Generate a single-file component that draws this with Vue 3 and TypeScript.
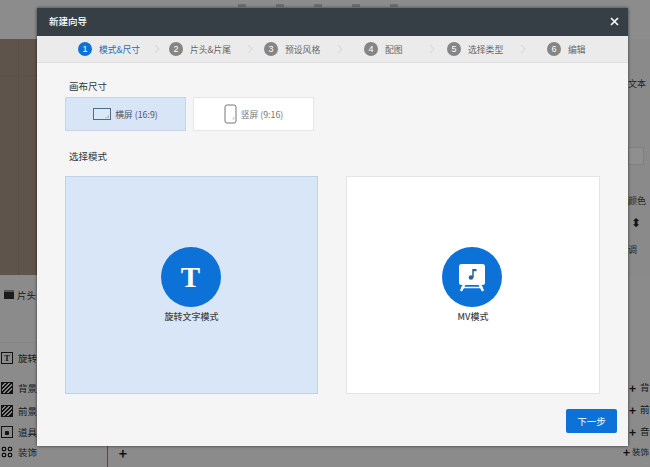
<script setup lang="ts">
import { ref } from "vue";

// width 到箭头为止，after 是箭头到下一步的距离
const steps = [
  { label: "模式&尺寸", width: 76, after: 9 },
  { label: "片头&片尾", width: 78, after: 11 },
  { label: "预设风格", width: 73, after: 21 },
  { label: "配图", width: 65, after: 12 },
  { label: "选择类型", width: 73, after: 21 },
  { label: "编辑", width: 47, after: 0 },
];

const activeStep = ref(0);
const ratio = ref("landscape");
const mode = ref("rotate");
const tracks = [
  { name: "旋转", icon: "T", h: 30 },
  { name: "背景", icon: "hatch", h: 30 },
  { name: "前景", icon: "hatch", h: 16 },
  { name: "道具", icon: "note", h: 26 },
  { name: "装饰", icon: "dots", h: 14 },
];
const rightTracks = ["背", "前", "音"];
</script>

<template>
  <div class="app">
    <!-- 背景里的编辑器 -->
    <div class="editor">
      <div class="toolbar">
        <i v-for="n in 5" :key="n"></i>
      </div>
      <div class="main">
        <div class="stage"></div>
        <div class="props">
          <div class="prop-tab">文本</div>
          <div class="prop-box"></div>
          <div class="prop-row">颜色</div>
          <div class="prop-row arrows">⬍</div>
          <div class="prop-row">调</div>
        </div>
      </div>
      <div class="timeline">
        <div class="track-head">
          <div class="head-row">
            <span class="film"></span>
            <span>片头</span>
          </div>
          <div class="track" v-for="t in tracks" :key="t.name" :style="{ height: t.h + 'px' }">
            <span class="track-icon" :class="t.icon">{{ t.icon === "T" ? "T" : "" }}</span>
            <span>{{ t.name }}</span>
          </div>
        </div>
        <div class="track-body">
          <div class="track-add">+</div>
        </div>
        <div class="track-right">
          <div class="add-row" v-for="r in rightTracks" :key="r">
            <b>+</b><span>{{ r }}</span>
          </div>
          <div class="add-row last"><b>+</b><span>装饰</span></div>
        </div>
      </div>
    </div>
    <div class="mask"></div>

    <!-- 新建向导 -->
    <div class="dialog">
      <header class="dialog-head">
        <span>新建向导</span>
        <svg class="close" width="9" height="9" viewBox="0 0 9 9">
          <path d="M1 1l7 7M8 1L1 8" stroke="#fff" stroke-width="1.6" fill="none" />
        </svg>
      </header>
      <nav class="steps">
        <template v-for="(s, i) in steps" :key="s.label">
          <div class="step" :class="{ active: i === activeStep }" :style="{ width: s.width + 'px' }">
            <span class="num">{{ i + 1 }}</span>
            <span>{{ s.label }}</span>
          </div>
          <svg
            v-if="i < steps.length - 1"
            class="chev"
            :style="{ marginRight: s.after + 'px' }"
            width="6"
            height="10"
            viewBox="0 0 6 10"
          >
            <path d="M1 1l4 4-4 4" stroke="#dcdcdc" stroke-width="1.2" fill="none" />
          </svg>
        </template>
      </nav>
      <div class="body">
        <h4>画布尺寸</h4>
        <div class="ratios">
          <button class="ratio" :class="{ on: ratio === 'landscape' }" @click="ratio = 'landscape'">
            <svg width="18" height="14" viewBox="0 0 18 14">
              <rect x="0.500" y="1.500" width="17" height="11" fill="#dbe8f6" stroke="#4f6b88" />
              <path d="M12.500 10.500h3V8" stroke="#8fa5ba" fill="none" stroke-width=".7" />
            </svg>
            <span>横屏 (16:9)</span>
          </button>
          <button class="ratio" :class="{ on: ratio === 'portrait' }" @click="ratio = 'portrait'">
            <svg width="13" height="20" viewBox="0 0 13 20">
              <rect x="1" y="1" width="11" height="18" rx="2" fill="#fff" stroke="#777" />
              <path d="M8.500 15h1.500v-2" stroke="#aaa" fill="none" stroke-width=".7" />
            </svg>
            <span>竖屏 (9:16)</span>
          </button>
        </div>
        <h4 class="second">选择模式</h4>
        <div class="modes">
          <div class="mode" :class="{ on: mode === 'rotate' }" @click="mode = 'rotate'">
            <div class="circle"><span class="t">T</span></div>
            <span class="mode-name">旋转文字模式</span>
          </div>
          <div class="mode" :class="{ on: mode === 'mv' }" @click="mode = 'mv'">
            <div class="circle">
              <svg width="32" height="30" viewBox="0 0 32 30">
                <rect x="3" y="2" width="26" height="21" rx="2.500" fill="#fff" />
                <path d="M8 23l-2.500 5M24 23l2.500 5" stroke="#fff" stroke-width="2.600" stroke-linecap="round" />
                <path d="M5 25.500h22" stroke="#fff" stroke-width="1.500" />
                <path d="M17 7v8.500" stroke="#2f5f95" stroke-width="1.500" />
                <path d="M17 7h3.500v2.200H17z" fill="#2f5f95" />
                <circle cx="15" cy="15.500" r="2.300" fill="#2f5f95" />
              </svg>
            </div>
            <span class="mode-name">MV模式</span>
          </div>
        </div>
        <div class="foot">
          <button class="next">下一步</button>
        </div>
      </div>
    </div>
  </div>
</template>

<style>
html,
body {
  margin: 0;
  overflow: hidden;
}
</style>

<style scoped>
.app {
  position: relative;
  width: 650px;
  height: 467px;
  overflow: hidden;
  font-family: "Noto Sans CJK SC", "Liberation Sans", sans-serif;
  font-size: 9.500px;
  color: #333;
}

.editor {
  display: flex;
  flex-direction: column;
  height: 100%;
  background: #f8f8f8;
}

.toolbar {
  display: flex;
  gap: 30px;
  height: 39px;
  padding: 4px 0 0 238px;
  background: #fafafa;
  box-sizing: border-box;
}

.toolbar i {
  width: 8px;
  height: 3px;
  background: #c4c4c4;
}

.main {
  display: flex;
  height: 236px;
}

.stage {
  flex: 1;
  background:
    linear-gradient(#9c8d80, #9c8d80) 0 36px / 100% 1px no-repeat,
    linear-gradient(#9c8d80, #9c8d80) 18px 0 / 1px 100% no-repeat,
    #a89688;
}

.props {
  width: 22px;
  background: #f6f6f6;
  padding-top: 38px;
  white-space: nowrap;
  font-size: 9px;
  color: #444;
  padding-left: 2px;
}

.prop-tab {
  height: 24px;
}

.prop-box {
  height: 16px;
  margin: 46px 6px 23px 0;
  border: 1px solid #e4e4e4;
  background: #fff;
}

.prop-row {
  height: 26px;
  line-height: 26px;
  margin-top: 8px;
}

.arrows {
  font-size: 12px;
  margin-top: -5px;
  padding-left: 3px;
  color: #222;
}

.arrows + .prop-row {
  margin-top: 2px;
}

.timeline {
  flex: 1;
  display: flex;
  background: #f8f8f8;
}

.track-head {
  width: 108px;
  box-sizing: border-box;
}

.head-row {
  display: flex;
  align-items: center;
  gap: 3px;
  height: 68px;
  padding: 0 0 28px 4px;
  box-sizing: border-box;
  border-bottom: 1px solid #eee;
}

.film {
  width: 10px;
  height: 9px;
  background: #333;
  border-top: 2px solid #999;
  box-sizing: border-box;
}

.track {
  display: flex;
  align-items: center;
  gap: 5px;
  padding-left: 1px;
  box-sizing: border-box;
}

.track-icon {
  width: 12px;
  height: 12px;
  flex: none;
  border: 1px solid #222;
  box-sizing: border-box;
  font: bold 9px/10px "Liberation Serif", serif;
  text-align: center;
}

.track-icon.hatch {
  background: repeating-linear-gradient(135deg, #222 0 1.500px, #eee 1.500px 3px);
}

.track-icon.note {
  background: radial-gradient(circle at 50% 60%, #222 0 2px, transparent 2.500px);
}

.track-icon.dots {
  border: 0;
  background: radial-gradient(circle, transparent 0 1.200px, #222 1.300px 2.400px, transparent 2.600px) 0 0 / 6px 6px;
}

.track-body {
  flex: 1;
  display: flex;
  align-items: flex-end;
  padding-bottom: 4px;
  border-left: 1px solid #e05a78;
  margin-left: -1px;
}

.track-add {
  width: 30px;
  height: 20px;
  line-height: 20px;
  text-align: center;
  font-size: 14px;
  font-weight: 700;
  color: #222;
}

.track-right {
  width: 22px;
  padding-top: 101px;
}

.add-row {
  display: flex;
  align-items: center;
  gap: 4px;
  height: 22px;
  white-space: nowrap;
}

.add-row b {
  font-size: 12px;
  color: #222;
  margin-left: 1px;
}

.add-row.last {
  gap: 2px;
  margin: -2px 0 0 -6px;
  font-size: 8.500px;
}

.mask {
  position: absolute;
  inset: 0;
  background: rgba(0, 0, 0, 0.44);
}

.dialog {
  position: absolute;
  left: 37px;
  top: 8px;
  width: 591px;
  height: 438px;
  display: flex;
  flex-direction: column;
  background: #f5f5f5;
  box-shadow: 0 0 3px rgba(0, 0, 0, 0.6);
}

.dialog-head {
  display: flex;
  align-items: center;
  justify-content: space-between;
  height: 28px;
  padding: 0 9px 2px 12px;
  box-sizing: border-box;
  background: #373f46;
  color: #fff;
  font-size: 9.500px;
  font-weight: 500;
  flex: none;
}

.steps {
  display: flex;
  align-items: center;
  height: 27px;
  padding-left: 41px;
  flex: none;
  background: #ebebeb;
  border-bottom: 1px solid #e0e0e0;
  box-sizing: border-box;
  font-size: 8.800px;
  color: #666;
}

.step {
  display: flex;
  align-items: center;
  gap: 7px;
  flex: none;
  white-space: nowrap;
}

.step.active {
  color: #2b6cb0;
}

.num {
  width: 14px;
  height: 14px;
  flex: none;
  border-radius: 50%;
  background: #858585;
  color: #fff;
  font: 9px/14px "Liberation Sans", sans-serif;
  text-align: center;
}

.step.active .num {
  background: #0d72d8;
}

.chev {
  flex: none;
}

.body {
  flex: 1;
  display: flex;
  flex-direction: column;
  padding: 16px 11px 13px 28px;
  min-height: 0;
}

h4 {
  margin: 0 0 4px 4px;
  font-size: 9.500px;
  font-weight: 400;
  line-height: 14px;
  color: #333;
}

.second {
  margin: 0 0 13px 4px;
}

.ratios {
  display: flex;
  gap: 7px;
  margin-bottom: 18px;
}

.ratio {
  display: flex;
  align-items: center;
  justify-content: center;
  gap: 4px;
  width: 121px;
  height: 34px;
  padding: 0;
  font: inherit;
  font-size: 8.800px;
  color: #777;
  background: #fff;
  border: 1px solid #e6e6e6;
  box-sizing: border-box;
}

.ratio.on {
  background: #d7e5f6;
  border-color: #c3d6ec;
  color: #556;
}

.modes {
  display: flex;
  gap: 28px;
}

.mode {
  display: flex;
  flex-direction: column;
  align-items: center;
  width: 253px;
  height: 218px;
  padding-top: 70px;
  box-sizing: border-box;
  background: #fff;
  border: 1px solid #e4e4e4;
  font-size: 9px;
}

.mode + .mode {
  width: 254px;
}

.mode.on {
  background: #d8e6f7;
  border-color: #bdd3eb;
}

.circle {
  display: flex;
  align-items: center;
  justify-content: center;
  width: 60px;
  height: 60px;
  margin-right: 2px;
  border-radius: 50%;
  background: #0d72d8;
}

.t {
  color: #fff;
  font: 700 29px/1 "Liberation Serif", serif;
}

.mode-name {
  margin-top: 3px;
  line-height: 14px;
  font-weight: 500;
  color: #444;
}

.foot {
  display: flex;
  justify-content: flex-end;
  margin-top: 15px;
}

.next {
  width: 51px;
  height: 24px;
  padding: 0;
  border: 0;
  border-radius: 2px;
  background: #0d72d8;
  color: #fff;
  font: inherit;
  font-size: 9.500px;
}
</style>
